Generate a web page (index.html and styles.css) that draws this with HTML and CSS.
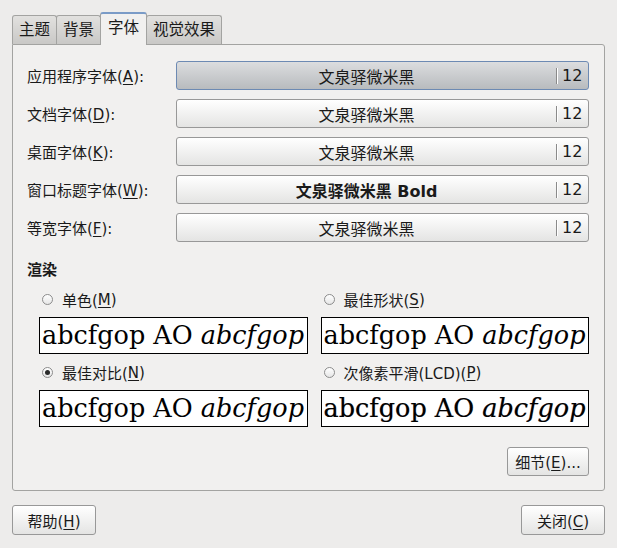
FILE: index.html
```html
<!DOCTYPE html>
<html lang="zh-CN">
<head>
    <meta charset="UTF-8">
    <meta name="viewport" content="width=device-width, initial-scale=1.0">
    <title>外观首选项</title>
    <link rel="stylesheet" href="styles.css">
</head>
<body>
    <div class="dialog">
        <div class="tabs">
            <div class="tab">主题</div>
            <div class="tab">背景</div>
            <div class="tab active">字体</div>
            <div class="tab">视觉效果</div>
        </div>

        <div class="panel">
            <div class="font-grid">
                <div class="font-label">应用程序字体(<u>A</u>):</div>
                <div class="font-btn hover"><span class="font-name">文泉驿微米黑</span><span class="font-size">12</span></div>

                <div class="font-label">文档字体(<u>D</u>):</div>
                <div class="font-btn"><span class="font-name">文泉驿微米黑</span><span class="font-size">12</span></div>

                <div class="font-label">桌面字体(<u>K</u>):</div>
                <div class="font-btn"><span class="font-name">文泉驿微米黑</span><span class="font-size">12</span></div>

                <div class="font-label">窗口标题字体(<u>W</u>):</div>
                <div class="font-btn"><span class="font-name bold">文泉驿微米黑 Bold</span><span class="font-size">12</span></div>

                <div class="font-label">等宽字体(<u>F</u>):</div>
                <div class="font-btn"><span class="font-name">文泉驿微米黑</span><span class="font-size">12</span></div>
            </div>

            <div class="section-title">渲染</div>

            <div class="render-grid">
                <div class="option">
                    <div class="radio-row"><span class="radio"></span>单色(<u>M</u>)</div>
                    <div class="preview mono">abcfgop AO <i>abcfgop</i></div>
                </div>
                <div class="option">
                    <div class="radio-row"><span class="radio"></span>最佳形状(<u>S</u>)</div>
                    <div class="preview">abcfgop AO <i>abcfgop</i></div>
                </div>
                <div class="option">
                    <div class="radio-row"><span class="radio checked"></span>最佳对比(<u>N</u>)</div>
                    <div class="preview">abcfgop AO <i>abcfgop</i></div>
                </div>
                <div class="option">
                    <div class="radio-row"><span class="radio"></span>次像素平滑(LCD)(<u>P</u>)</div>
                    <div class="preview lcd">abcfgop AO <i>abcfgop</i></div>
                </div>
            </div>

            <div class="details-row">
                <button class="btn details">细节(<u>E</u>)...</button>
            </div>
        </div>

        <div class="footer">
            <button class="btn">帮助(<u>H</u>)</button>
            <button class="btn">关闭(<u>C</u>)</button>
        </div>
    </div>
</body>
</html>
```

FILE: styles.css
```css
body {
    margin: 0;
    background-color: #edeceb;
    font-family: "DejaVu Sans", "Noto Sans CJK SC", sans-serif;
    font-size: 15px;
    color: #1a1a1a;
}
u {
    text-decoration-thickness: 1px;
    text-underline-offset: 2px;
}
.dialog {
    padding: 12px 12px 0 12px;
}

/* notebook tabs */
.tabs {
    display: flex;
    align-items: flex-end;
    height: 32px;
    font-size: 15.5px;
}
.tab {
    height: 28px;
    line-height: 28px;
    padding: 0 6px;
    border: 1px solid #a3a3a1;
    border-bottom: none;
    border-radius: 3px 3px 0 0;
    background: linear-gradient(#e2e1df, #c9c8c6);
    margin-left: -1px;
}
.tab:first-child {
    margin-left: 0;
}
.tab.active {
    height: 31px;
    line-height: 28px;
    padding: 0 7px;
    background: #f1f0ef;
    border-top: 2px solid #7a9bc7;
    position: relative;
    z-index: 1;
    margin-bottom: -1px;
}

.panel {
    background-color: #f1f0ef;
    border: 1px solid #a3a3a1;
    border-radius: 0 3px 3px 3px;
    padding: 16px 15px 14px 14px;
}

/* font pickers */
.font-grid {
    display: grid;
    grid-template-columns: 149px 1fr;
    row-gap: 9px;
    align-items: center;
}
.font-label {
    white-space: nowrap;
}
.font-btn {
    display: flex;
    align-items: center;
    height: 27px;
    border: 1px solid #989898;
    border-radius: 3px;
    background: linear-gradient(#ffffff, #e4e4e3);
    font-size: 16px;
}
.font-btn.hover {
    border-color: #6d8ab3;
    background: linear-gradient(#dcdddf, #b8bbbe);
}
.font-name {
    flex: 1;
    text-align: center;
    white-space: nowrap;
}
.font-name.bold {
    font-weight: bold;
}
.font-size {
    width: 26px;
    padding-left: 5px;
    border-left: 1px solid #8a8a8a;
    box-shadow: 1px 0 0 #ffffff inset;
    line-height: 16px;
}

/* rendering */
.section-title {
    font-weight: bold;
    line-height: 19px;
    margin-top: 19px;
}
.render-grid {
    display: grid;
    grid-template-columns: 1fr 1fr;
    column-gap: 13px;
    row-gap: 9px;
    margin: 10px 0 0 12px;
}
.radio-row {
    display: flex;
    align-items: center;
    height: 19px;
    padding-left: 3px;
    white-space: nowrap;
}
.radio {
    width: 9px;
    height: 9px;
    border: 1px solid #8c8c8c;
    border-radius: 50%;
    background: linear-gradient(#ffffff, #e6e6e6);
    margin-right: 9px;
    position: relative;
}
.radio.checked::after {
    content: "";
    position: absolute;
    left: 2px;
    top: 2px;
    width: 5px;
    height: 5px;
    border-radius: 50%;
    background-color: #2a2a2a;
}
.preview {
    margin-top: 8px;
    height: 35px;
    line-height: 35px;
    border: 1px solid #000000;
    background-color: #ffffff;
    font-family: "DejaVu Serif", serif;
    font-size: 25.5px;
    color: #000000;
    padding-left: 2px;
    white-space: nowrap;
    overflow: hidden;
}
.preview.lcd {
    text-shadow: 0.5px 0 0 rgba(180, 110, 0, 0.35), -0.5px 0 0 rgba(0, 60, 200, 0.35);
}

.details-row {
    display: flex;
    justify-content: flex-end;
    margin-top: 20px;
}

/* buttons */
.btn {
    font-family: inherit;
    font-size: 15px;
    color: #1a1a1a;
    height: 30px;
    padding: 0;
    border: 1px solid #989898;
    border-radius: 3px;
    background: linear-gradient(#ffffff, #e4e4e3);
    white-space: nowrap;
}
.btn.details {
    width: 82px;
    height: 29px;
}
.footer {
    display: flex;
    justify-content: space-between;
    margin-top: 14px;
}
.footer .btn {
    width: 84px;
}
```
